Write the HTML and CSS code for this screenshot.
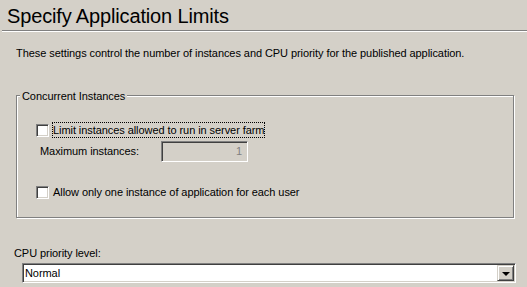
FILE: index.html
```html
<!DOCTYPE html>
<html>
<head>
<meta charset="utf-8">
<link rel="stylesheet" href="styles.css">
</head>
<body>
<div class="page">
  <h1 class="title">Specify Application Limits</h1>
  <div class="separator"></div>
  <p class="desc">These settings control the number of instances and CPU priority for the published application.</p>
  <div class="group">
    <span class="legend">Concurrent Instances</span>
    <div class="check-row">
      <span class="checkbox"></span>
      <span class="check-label focused">Limit instances allowed to run in server farm</span>
    </div>
    <div class="field-row">
      <span class="field-label">Maximum instances:</span>
      <span class="textbox disabled">1</span>
    </div>
    <div class="check-row second">
      <span class="checkbox"></span>
      <span class="check-label">Allow only one instance of application for each user</span>
    </div>
  </div>
  <div class="cpu-label">CPU priority level:</div>
  <div class="combo">
    <span class="combo-value">Normal</span>
    <span class="combo-button"><span class="arrow"></span></span>
  </div>
</div>
</body>
</html>
```

FILE: styles.css
```css
html, body {
  margin: 0;
  padding: 0;
  background: #d4d0c8;
}
body {
  font-family: "Liberation Sans", Arial, sans-serif;
  font-size: 11px;
  line-height: 13px;
  letter-spacing: -0.07px;
  color: #000;
}
.page {
  display: flex;
  flex-direction: column;
  width: 527px;
  height: 287px;
  overflow: hidden;
}
.title {
  margin: 0 0 0 7px;
  padding-top: 4px;
  font-size: 20px;
  letter-spacing: -0.15px;
  line-height: 24px;
  font-weight: normal;
}
.separator {
  margin: 2px 0 0 2px;
  border-top: 1px solid #808080;
  border-bottom: 1px solid #ffffff;
}
.desc {
  margin: 15px 0 0 16px;
}
.group {
  position: relative;
  margin: 35px 0 0 16px;
  width: 498px;
  box-sizing: border-box;
  border: 1px solid #808080;
  box-shadow: 1px 1px 0 #ffffff, inset 1px 1px 0 #ffffff;
  padding: 26px 0 17px 19px;
  display: flex;
  flex-direction: column;
}
.legend {
  position: absolute;
  top: -6px;
  left: 3px;
  padding: 0 2px;
  background: #d4d0c8;
}
.check-row {
  display: flex;
  align-items: flex-start;
  gap: 3px;
}
.check-row.second {
  margin-top: 22px;
}
.checkbox {
  margin-top: 2px;
  width: 13px;
  height: 13px;
  box-sizing: border-box;
  background: #ffffff;
  border-style: solid;
  border-width: 1px;
  border-color: #808080 #ffffff #ffffff #808080;
  box-shadow: inset 1px 1px 0 #404040, inset -1px -1px 0 #d4d0c8;
}
.check-label {
  border: 1px dotted transparent;
  padding: 1px 0 0 0;
}
.check-label.focused {
  border-color: #000;
}
.field-row {
  display: flex;
  align-items: center;
  margin-top: 3px;
  padding-left: 4px;
}
.field-label {
  width: 121px;
}
.textbox {
  width: 87px;
  height: 21px;
  box-sizing: border-box;
  border-style: solid;
  border-width: 1px;
  border-color: #808080 #ffffff #ffffff #808080;
  box-shadow: inset 1px 1px 0 #404040, inset -1px -1px 0 #d4d0c8;
  text-align: right;
  padding: 3px 5px 0 0;
}
.textbox.disabled {
  background: #d4d0c8;
  color: #808080;
}
.cpu-label {
  margin: 29px 0 0 14px;
}
.combo {
  margin: 3px 0 0 22px;
  width: 494px;
  height: 20px;
  box-sizing: border-box;
  background: #ffffff;
  border-style: solid;
  border-width: 1px;
  border-color: #808080 #ffffff #ffffff #808080;
  box-shadow: inset 1px 1px 0 #404040, inset -1px -1px 0 #d4d0c8;
  display: flex;
  padding: 1px;
}
.combo-value {
  flex: 1;
  padding: 2px 0 0 1px;
}
.combo-button {
  width: 17px;
  box-sizing: border-box;
  background: #d4d0c8;
  border-style: solid;
  border-width: 1px;
  border-color: #d4d0c8 #404040 #404040 #d4d0c8;
  box-shadow: inset 1px 1px 0 #ffffff, inset -1px -1px 0 #808080;
  display: flex;
  align-items: center;
  justify-content: center;
}
.arrow {
  width: 0;
  height: 0;
  border-left: 4px solid transparent;
  border-right: 4px solid transparent;
  border-top: 4px solid #000;
  margin-top: 1px;
}
```
